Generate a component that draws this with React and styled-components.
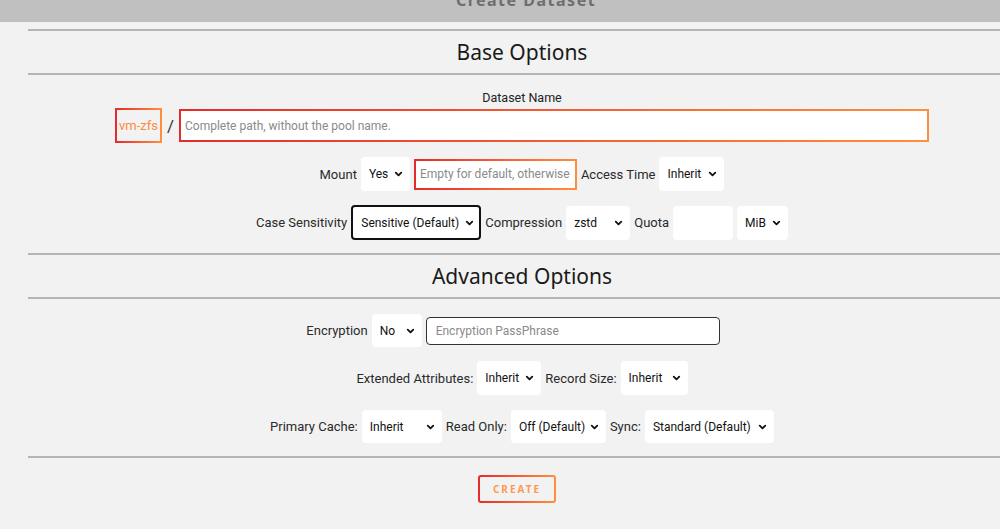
import React from 'react'
import styled, { createGlobalStyle } from 'styled-components'
import { ChevronDown } from 'lucide-react'

const GlobalStyle = createGlobalStyle`
  html, body {
    margin: 0;
    padding: 0;
    background: #f2f2f2;
    overflow: hidden;
    font-family: Roboto, "Liberation Sans", sans-serif;
  }
`

const gradient = 'linear-gradient(to right, #e52b2b, #ff8f3d)'

const TopBar = styled.div`
  height: 22px;
  background: #c0c0c0;
  overflow: hidden;
  display: flex;
  justify-content: center;
  padding-left: 52px;
  span {
    margin-top: -11px;
    font-family: "Noto Sans", sans-serif;
    font-weight: 700;
    font-size: 16px;
    letter-spacing: 1.5px;
    color: #6e6e6e;
  }
`

const Page = styled.div`
  margin-left: 28px;
  margin-right: -16px;
  padding-top: 7px;
`

const SectionTitle = styled.h2`
  margin: ${p => p.$top || 0}px 0 0;
  border-top: 2px solid #b4b4b4;
  border-bottom: 2px solid #b4b4b4;
  height: 42px;
  line-height: 42px;
  text-align: center;
  font-family: "Noto Sans", sans-serif;
  font-weight: 400;
  font-size: 21px;
  color: #1a1a1a;
`

const Rule = styled.div`
  border-top: 2px solid #b4b4b4;
`

const FieldTitle = styled.div`
  text-align: center;
  font-size: 12.5px;
  color: #222;
  margin-top: 16px;
  line-height: 14px;
`

const Row = styled.div`
  display: flex;
  justify-content: center;
  align-items: center;
  gap: 4px;
  margin-top: ${p => p.$top || 14}px;
  margin-bottom: ${p => p.$bottom || 0}px;
  padding-right: ${p => p.$shift || 0}px;
`

const Label = styled.span`
  font-size: 13px;
  color: #2a2a2a;
  white-space: nowrap;
`

const Pool = styled.div`
  width: 43px;
  height: 31px;
  border: 2px solid;
  border-image: ${gradient} 1;
  display: flex;
  align-items: center;
  justify-content: center;
  font-size: 13px;
  color: #ff8a3a;
`

const Slash = styled.span`
  font-size: 17px;
  color: #333;
  margin: 0 1px;
`

const Input = styled.input`
  box-sizing: border-box;
  width: ${p => p.$w}px;
  height: ${p => p.$h || 32}px;
  background: #fff;
  border: ${p => (p.$plain ? 'none' : p.$dark ? '1px solid #333' : '2px solid')};
  border-image: ${p => (p.$plain || p.$dark ? 'none' : `${gradient} 1`)};
  border-radius: ${p => (p.$dark || p.$plain ? 4 : 0)}px;
  padding: 0 ${p => (p.$dark ? 9 : 4)}px;
  font-family: Roboto, sans-serif;
  font-size: 12px;
  outline: none;
  &::placeholder {
    color: #8a8a8a;
  }
`

const SelectWrap = styled.div`
  position: relative;
  width: ${p => p.$w}px;
  height: ${p => p.$h || 34}px;
  flex-shrink: 0;
  svg {
    position: absolute;
    right: 6px;
    top: 50%;
    transform: translateY(-50%);
    pointer-events: none;
  }
`

const SelectBox = styled.select`
  appearance: none;
  box-sizing: border-box;
  width: 100%;
  height: 100%;
  background: #fff;
  border: ${p => (p.$outlined ? '2px solid #111' : 'none')};
  border-radius: 4px;
  padding: 0 0 0 8px;
  font-family: Roboto, sans-serif;
  font-size: 12px;
  color: #111;
  outline: none;
`

const Select = ({ w, h, value, outlined }) => (
  <SelectWrap $w={w} $h={h}>
    <SelectBox $outlined={outlined} defaultValue={value}>
      <option>{value}</option>
    </SelectBox>
    <ChevronDown size={11} strokeWidth={4} color="#111" />
  </SelectWrap>
)

const CreateButton = styled.button`
  width: 78px;
  height: 28px;
  border: 2px solid transparent;
  border-radius: 3px;
  background: linear-gradient(#f2f2f2, #f2f2f2) padding-box, ${gradient} border-box;
  font-family: "Noto Sans", sans-serif;
  font-weight: 700;
  font-size: 10px;
  letter-spacing: 2px;
  color: #ff9a52;
  cursor: pointer;
`

export default function App() {
  return (
    <>
      <GlobalStyle />
      <TopBar>
        <span>Create Dataset</span>
      </TopBar>
      <Page>
        <SectionTitle>Base Options</SectionTitle>
        <FieldTitle>Dataset Name</FieldTitle>
        <Row $top={3}>
          <Pool>vm-zfs</Pool>
          <Slash>/</Slash>
          <Input $w={750} $h={33} placeholder="Complete path, without the pool name." />
        </Row>
        <Row>
          <Label>Mount</Label>
          <Select w={49} value="Yes" />
          <Input $w={163} $h={31} placeholder="Empty for default, otherwise" />
          <Label>Access Time</Label>
          <Select w={65} value="Inherit" />
        </Row>
        <Row>
          <Label>Case Sensitivity</Label>
          <Select w={130} h={35} value="Sensitive (Default)" outlined />
          <Label>Compression</Label>
          <Select w={64} value="zstd" />
          <Label>Quota</Label>
          <Input $w={60} $h={34} $plain />
          <Select w={51} value="MiB" />
        </Row>
        <SectionTitle $top={13}>Advanced Options</SectionTitle>
        <Row $top={15} $shift={18}>
          <Label>Encryption</Label>
          <Select w={50} h={33} value="No" />
          <Input $w={294} $h={28} $dark placeholder="Encryption PassPhrase" />
        </Row>
        <Row>
          <Label>Extended Attributes:</Label>
          <Select w={64} value="Inherit" />
          <Label>Record Size:</Label>
          <Select w={67} value="Inherit" />
        </Row>
        <Row $top={15} $bottom={13}>
          <Label>Primary Cache:</Label>
          <Select w={80} h={33} value="Inherit" />
          <Label>Read Only:</Label>
          <Select w={95} h={33} value="Off (Default)" />
          <Label>Sync:</Label>
          <Select w={129} h={33} value="Standard (Default)" />
        </Row>
        <Rule />
        <Row $top={17} $shift={10}>
          <CreateButton>CREATE</CreateButton>
        </Row>
      </Page>
    </>
  )
}
